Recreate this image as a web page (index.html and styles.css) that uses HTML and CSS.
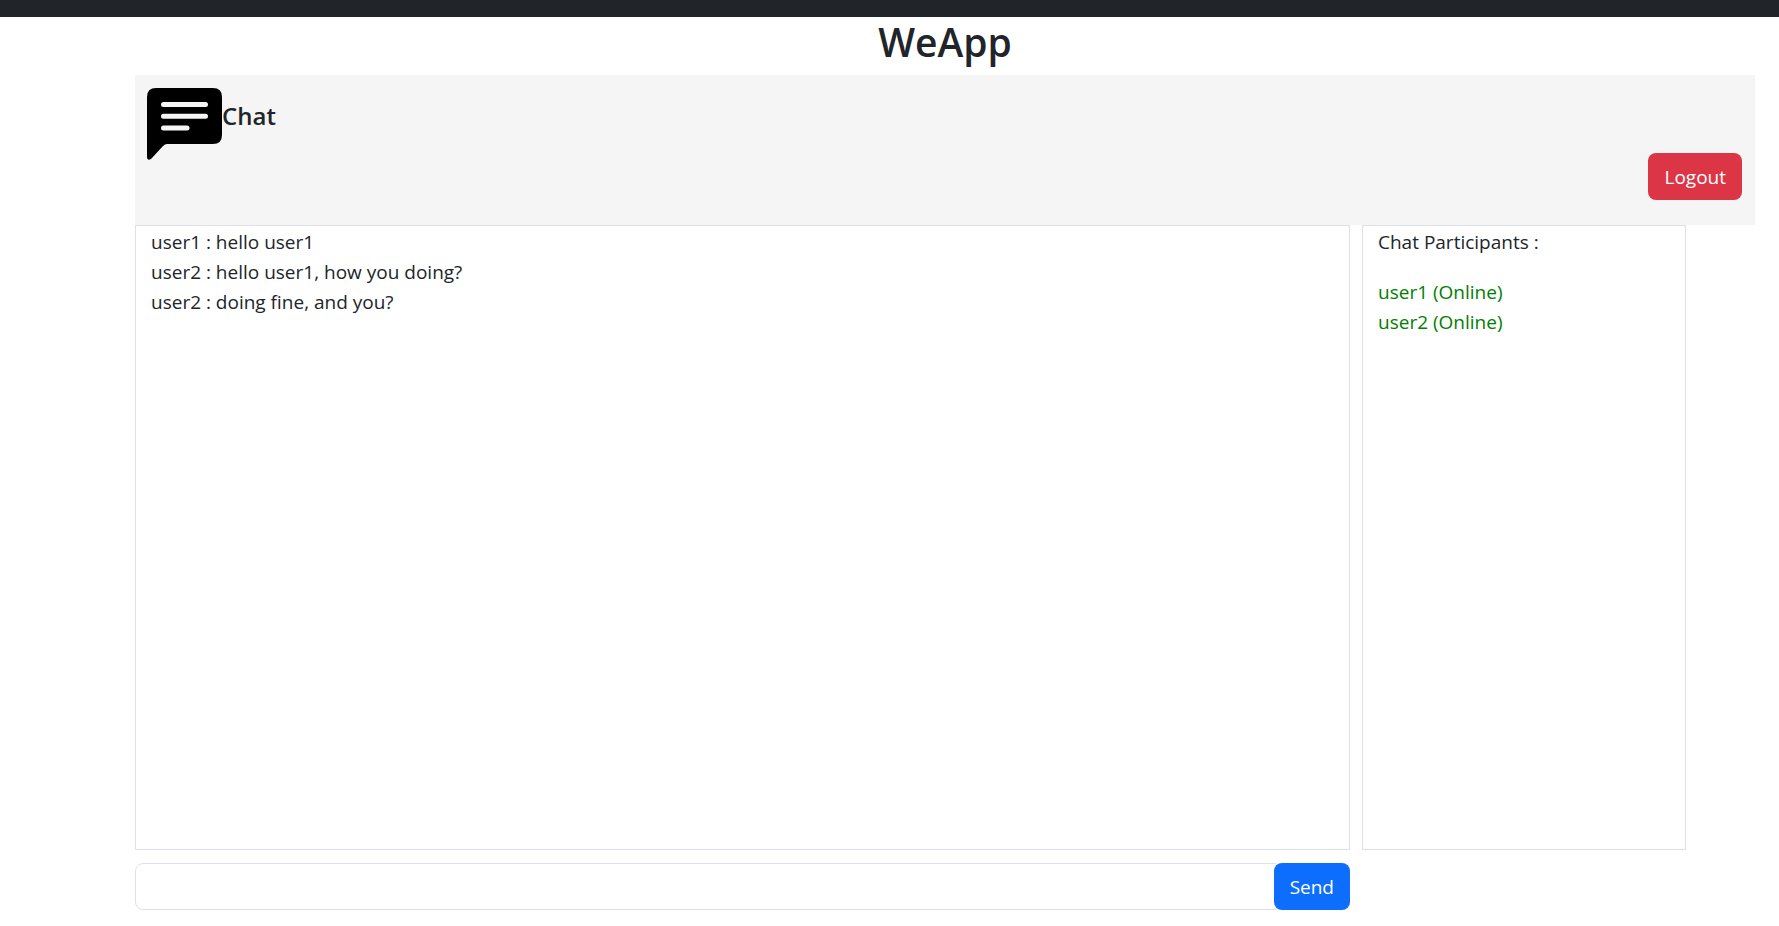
FILE: index.html
```html
<!DOCTYPE html>
<html lang="en">
<head>
<meta charset="utf-8">
<meta name="viewport" content="width=device-width, initial-scale=1">
<title>WeApp</title>
<link rel="stylesheet" href="styles.css">
</head>
<body>
<nav class="topbar"></nav>
<main class="container">
  <h1 class="title">WeApp</h1>
  <header class="chat-header">
    <div class="brand">
      <svg class="brand-icon" viewBox="0 0 75 75" aria-hidden="true">
        <path d="M9 0H66Q75 0 75 9V47Q75 56 66 56H20Q18 56 16 58L4 71Q0 73 0 69V9Q0 0 9 0Z" fill="#000"/>
        <path d="M16.500 16.500H58.500M16.500 28.300H58.500M16.500 40H40" stroke="#f5f5f5" stroke-width="5" stroke-linecap="round"/>
      </svg>
      <h2 class="brand-name">Chat</h2>
    </div>
    <button class="btn btn-danger" type="button">Logout</button>
  </header>
  <div class="panels">
    <section class="panel messages">
      <p class="line">user1 : hello user1</p>
      <p class="line">user2 : hello user1, how you doing?</p>
      <p class="line">user2 : doing fine, and you?</p>
    </section>
    <aside class="panel participants">
      <p class="participants-title">Chat Participants :</p>
      <p class="line online">user1 (Online)</p>
      <p class="line online">user2 (Online)</p>
    </aside>
  </div>
  <form class="composer">
    <input class="composer-input" type="text" aria-label="Message">
    <button class="btn btn-primary" type="button">Send</button>
  </form>
</main>
</body>
</html>
```
FILE: styles.css
```css
* {
  box-sizing: border-box;
}

body {
  margin: 0;
  background: #fff;
  color: #212529;
  font-family: "Segoe UI", "Open Sans", "Noto Sans", sans-serif;
  font-size: 19px;
  line-height: 30px;
}

h1, h2, p {
  margin: 0;
}

.topbar {
  height: 17px;
  background: #212529;
}

.container {
  padding: 0 24px 0 135px;
}

.title {
  padding-bottom: 8px;
  font-size: 39px;
  line-height: 50px;
  font-weight: 600;
  text-align: center;
}

.chat-header {
  display: flex;
  flex-direction: column;
  min-height: 150px;
  padding: 13px 13px 25px 12px;
  background: #f5f5f5;
}

.brand {
  display: flex;
  height: 65px;
}

.brand-icon {
  flex: none;
  width: 75px;
  height: 75px;
}

.brand-name {
  padding-top: 13px;
  font-size: 24px;
  line-height: 30px;
  font-weight: 600;
}

.btn {
  padding: 8px 16px 6px;
  border: 0 solid transparent;
  border-radius: 8px;
  color: #fff;
  font: inherit;
  line-height: 33px;
}

.btn-danger {
  align-self: flex-end;
  background: #dc3545;
}

.btn-primary {
  margin-left: -8px;
  background: #0d6efd;
}

.panels {
  display: flex;
  gap: 12px;
}

.panel {
  height: 625px;
  padding: 1px 15px;
  border: 1px solid #dee2e6;
}

.messages {
  width: 75%;
}

.participants {
  width: 20%;
}

.participants-title {
  margin-bottom: 20px;
}

.online {
  color: green;
}

.composer {
  display: flex;
  width: 75%;
  margin-top: 13px;
}

.composer-input {
  flex: 1;
  min-width: 0;
  padding: 7px 15px;
  border: 1px solid #dee2e6;
  border-radius: 8px;
  background: #fff;
  color: inherit;
  font: inherit;
}
```
